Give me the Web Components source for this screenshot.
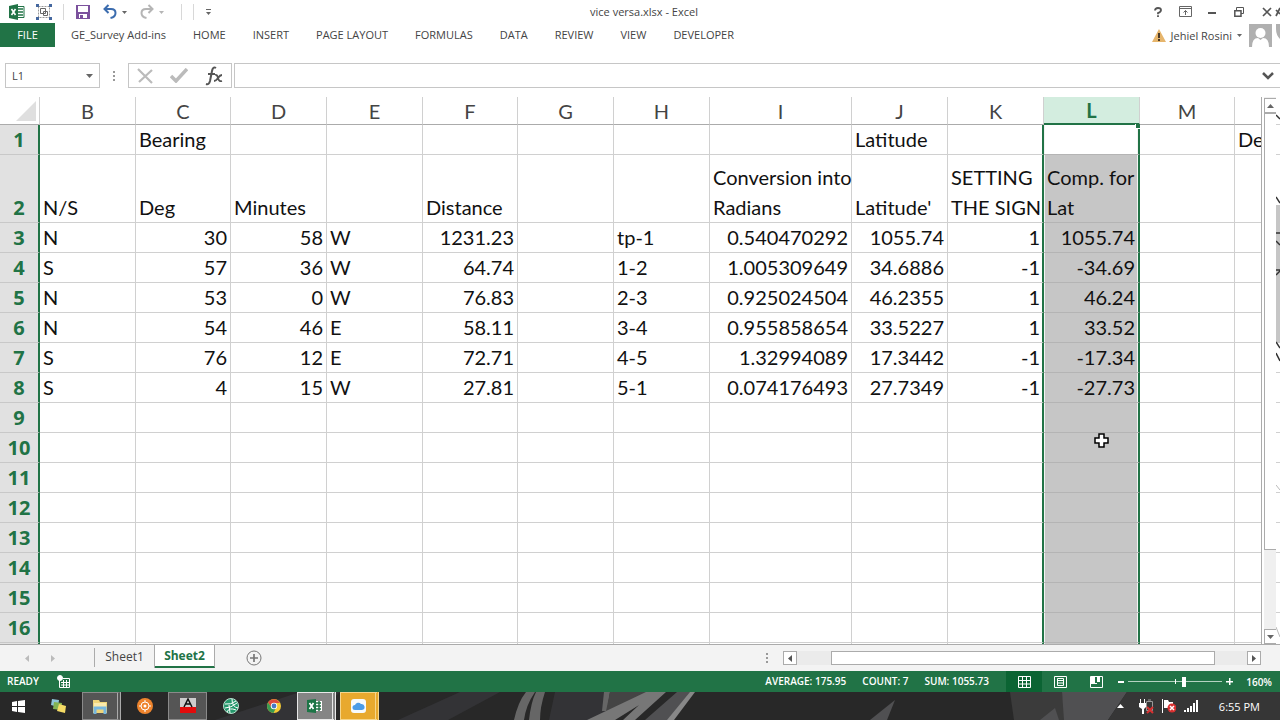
<!DOCTYPE html>
<html lang="en">
<head>
<meta charset="utf-8">
<title>vice versa.xlsx - Excel</title>
<style>
  :root {
    --green: #217346;
    --line: #d0d0d0;
    --edge: #ababab;
    --icon: #666;
    --ui: "Open Sans", "Noto Sans", sans-serif;
    --cells: Lato, "Liberation Sans", sans-serif;
  }
  body {
    margin: 0;
    font-family: var(--ui);
    font-size: 11px;
    color: #444;
    background: #fff;
  }
</style>
</head>
<body>
<excel-window>
  <title-bar slot="top">vice versa.xlsx - Excel</title-bar>
  <ribbon-tabs slot="top" user="Jehiel Rosini"></ribbon-tabs>
  <formula-bar slot="top" cell="L1"></formula-bar>
  <sheet-grid></sheet-grid>
  <sheet-tabs slot="bottom"></sheet-tabs>
  <status-bar slot="bottom"></status-bar>
  <task-bar slot="bottom" time="6:55 PM"></task-bar>
</excel-window>

<script>
/**
 * Base class: every element renders once into its own open shadow root.
 */
class BaseElement extends HTMLElement {
  constructor() {
    super();
    this.attachShadow({ mode: 'open' });
  }

  connectedCallback() {
    this.shadowRoot.innerHTML = `
      <style>
        *, :host { box-sizing: border-box; }
        :host { display: flex; flex: none; }
        button {
          display: flex;
          align-items: center;
          justify-content: center;
          flex: none;
          margin: 0;
          padding: 0;
          border: 0;
          background: none;
          font: inherit;
          color: inherit;
          white-space: nowrap;
        }
        input { font: inherit; color: inherit; margin: 0; outline: none; border-radius: 0; }
        svg { display: block; flex: none; }
      </style>
      ${this.template()}`;
  }
}

class ExcelWindow extends BaseElement {
  template() {
    return `
      <style>
        :host { flex-direction: column; height: 100vh; overflow: hidden; }
        main { display: flex; flex: 1; min-height: 0; }
      </style>
      <slot name="top"></slot>
      <main><slot></slot></main>
      <slot name="bottom"></slot>`;
  }
}

class TitleBar extends BaseElement {
  template() {
    return `
      <style>
        :host { height: 23px; align-items: center; justify-content: space-between; }
        .side { display: flex; align-items: center; flex: 1 1 0; height: 21px; }
        .left { padding-left: 8px; }
        .right { justify-content: flex-end; gap: 11px; overflow: hidden; }
        .right button { width: 16px; }
        .right .close { width: 22px; justify-content: flex-end; }
        .rule { width: 1px; height: 16px; background: #d8d8d8; flex: none; }
        .name { line-height: 23px; white-space: nowrap; }
        .gap { width: 11px; }
        .wide { width: 16px; }
      </style>
      <div class="side left">
        <button aria-label="Excel"><svg width="17" height="16"><path fill="#217346" d="M1 2l9-2v16l-9-2z"/><path fill="#fff" stroke="#217346" d="M10 2.500h6v11h-6"/><path stroke="#217346" stroke-width="1.500" d="M10 5h5M10 8h5M10 11h5"/><path stroke="#fff" stroke-width="1.600" d="M3.500 5l4 6M7.500 5l-4 6"/></svg></button>
        <span class="gap"></span>
        <button aria-label="Group objects"><svg width="16" height="16" fill="none"><path stroke="#999" stroke-dasharray="2 1" d="M2.500 2.500h11v11h-11z"/><path stroke="#666" d="M4.500 4.500h5v5h-5zM7.500 7.500h4v4h-4z"/><path fill="#44679f" d="M0 0h3v3H0zM13 0h3v3h-3zM0 13h3v3H0zM13 13h3v3h-3z"/></svg></button>
        <span class="gap"></span><span class="rule"></span><span class="gap"></span>
        <button aria-label="Save"><svg width="16" height="16"><path fill="#7b519d" d="M1 1h14v14H1z"/><path fill="#fff" d="M3 2h10v6H3zM4 10h8v4H4z"/><path fill="#7b519d" d="M5 11h3v3H5z"/></svg></button>
        <span class="gap"></span>
        <button aria-label="Undo"><svg width="26" height="16" fill="none"><path stroke="#3b6cae" stroke-width="2" d="M3 5h6q4.500 0 4.500 4t-5 5M6.500 1L2.500 5l4 4"/><path fill="#666" d="M20 7h5l-2.500 3z"/></svg></button>
        <span class="gap"></span>
        <button aria-label="Redo"><svg width="26" height="16" fill="none"><path stroke="#b5b5b5" stroke-width="2" d="M13 5H7Q2.500 5 2.500 9t5 5M9.500 1l4 4-4 4"/><path fill="#b5b5b5" d="M20 7h5l-2.500 3z"/></svg></button>
        <span class="wide"></span><span class="rule"></span><span class="gap"></span><span class="rule"></span><span class="gap"></span>
        <button aria-label="Customize"><svg width="7" height="8"><path stroke="#666" d="M1 1.500h5"/><path fill="#666" d="M1 4h5L3.500 7z"/></svg></button>
      </div>
      <span class="name"><slot></slot></span>
      <div class="side right">
        <button aria-label="Help"><svg width="8" height="10" fill="none" stroke="#555" stroke-width="1.800"><path d="M1 3.500Q1 1 4 1t3 2-3 3v1.300M4 8.200V10"/></svg></button>
        <button aria-label="Ribbon options"><svg width="13" height="11" fill="none" stroke="#666"><path d="M.5.500h12v10H.5zM0 2.500h13M6.500 9V4.500M4.500 6.500l2-2 2 2"/></svg></button>
        <button aria-label="Minimize"><svg width="8" height="8"><path fill="#555" d="M0 4h8v2H0z"/></svg></button>
        <button aria-label="Restore"><svg width="10" height="10" fill="none" stroke="#555"><path d="M2.500 3V.5h7v6H7"/><path stroke-width="1.500" d="M.8 3.800H7v5.400H.8z"/></svg></button>
        <button class="close" aria-label="Close"><svg width="18" height="10" fill="none" stroke="#555" stroke-width="1.700"><path d="M1 1l8 8M9 1L1 9M18 1l-4 8M14 3l4 4"/></svg></button>
      </div>`;
  }
}

class RibbonTabs extends BaseElement {
  template() {
    const tabs = ['GE_Survey Add-ins', 'HOME', 'INSERT', 'PAGE LAYOUT', 'FORMULAS', 'DATA', 'REVIEW', 'VIEW', 'DEVELOPER'];
    return `
      <style>
        :host { height: 24px; justify-content: space-between; overflow: hidden; }
        nav { display: flex; gap: 27px; }
        nav button { padding-bottom: 1px; }
        .file { width: 55px; margin-right: -11px; background: var(--green); color: #fff; }
        .user { display: flex; align-items: center; gap: 5px; }
        .face { margin-left: 2px; }
      </style>
      <nav>
        <button class="file">FILE</button>
        ${tabs.map(tab => `<button>${tab}</button>`).join('')}
      </nav>
      <div class="user">
        <svg width="14" height="13"><path fill="#e6b56c" d="M7 0l7 13H0z"/><path fill="#4a3a28" d="M6 4h2v5H6zM6 10h2v2H6z"/></svg>
        <button>${this.getAttribute('user')}</button>
        <svg width="5" height="3"><path fill="#666" d="M0 0h5L2.500 3z"/></svg>
        <svg class="face" width="31" height="23"><path fill="#b0b0b0" d="M0 0h23v23H0zM27 0h4v15q-4-4-4-10z"/><circle cx="11.500" cy="9" r="5" fill="#fff"/><path fill="#fff" d="M3 23q0-9 6-9l2.500 2 2.500-2q6 0 6 9z"/></svg>
      </div>`;
  }
}

class FormulaBar extends BaseElement {
  template() {
    return `
      <style>
        :host { padding: 16px 0 9px 5px; }
        .box { display: flex; align-items: center; height: 25px; border: 1px solid #c6c6c6; }
        .name { width: 95px; }
        .name input { width: 80px; padding: 0 6px 1px; border: 0; background: none; }
        .dots { width: 28px; display: flex; align-items: center; justify-content: center; }
        .tools { width: 104px; justify-content: space-around; margin-right: 2px; }
        .formula { flex: 1; border-right: 0; }
        .formula input { flex: 1; min-width: 0; border: 0; background: none; }
        .formula button { width: 24px; }
      </style>
      <div class="box name">
        <input aria-label="Name box" value="${this.getAttribute('cell')}">
        <svg width="7" height="4"><path fill="#666" d="M0 0h7L3.500 4z"/></svg>
      </div>
      <div class="dots"><svg width="2" height="10"><path fill="#999" d="M0 0h2v2H0zM0 4h2v2H0zM0 8h2v2H0z"/></svg></div>
      <div class="box tools">
        <button aria-label="Cancel"><svg width="17" height="16" fill="none" stroke="#bbb" stroke-width="2.200"><path d="M1 1l14 14M15 2L2 14"/></svg></button>
        <button aria-label="Enter"><svg width="18" height="15" fill="none" stroke="#bbb" stroke-width="3.500"><path d="M1 8l5 5L17 1"/></svg></button>
        <button aria-label="Insert function"><svg width="18" height="20" fill="none" stroke="#555"><path stroke-width="2" d="M11 2Q8 0 7 5L5 15q-1 4-4 3M3 8h7"/><path stroke-width="1.800" d="M10 9q2-1 3 3t4 3M17 9q-2 0-4 3t-4 3"/></svg></button>
      </div>
      <div class="box formula">
        <input aria-label="Formula">
        <button aria-label="Expand"><svg width="12" height="8" fill="none" stroke="#555" stroke-width="2.500"><path d="M1 1l5 5 5-5"/></svg></button>
      </div>`;
  }
}

const COLUMNS = [
  ['B', 96], ['C', 95], ['D', 96], ['E', 96], ['F', 95], ['G', 96], ['H', 96],
  ['I', 142], ['J', 96], ['K', 96], ['L', 96], ['M', 95], ['', 96]
];

const ROWS = {
  1: { C: 'Bearing', J: 'Latitude', N: 'De' },
  2: { B: 'N/S', C: 'Deg', D: 'Minutes', F: 'Distance', I: 'Conversion into<br>Radians', J: "Latitude'", K: 'SETTING<br>THE SIGN', L: 'Comp. for<br>Lat' },
  3: { B: 'N', C: 30, D: 58, E: 'W', F: '1231.23', H: 'tp-1', I: '0.540470292', J: '1055.74', K: 1, L: '1055.74' },
  4: { B: 'S', C: 57, D: 36, E: 'W', F: '64.74', H: '1-2', I: '1.005309649', J: '34.6886', K: -1, L: '-34.69' },
  5: { B: 'N', C: 53, D: '0', E: 'W', F: '76.83', H: '2-3', I: '0.925024504', J: '46.2355', K: 1, L: '46.24' },
  6: { B: 'N', C: 54, D: 46, E: 'E', F: '58.11', H: '3-4', I: '0.955858654', J: '33.5227', K: 1, L: '33.52' },
  7: { B: 'S', C: 76, D: 12, E: 'E', F: '72.71', H: '4-5', I: '1.32994089', J: '17.3442', K: -1, L: '-17.34' },
  8: { B: 'S', C: 4, D: 15, E: 'W', F: '27.81', H: '5-1', I: '0.074176493', J: '27.7349', K: -1, L: '-27.73' }
};

const LAST_ROW = 16;

class SheetGrid extends BaseElement {
  cell(row, col) {
    const value = (ROWS[row] || {})[col || 'N'] ?? '';
    const isNumber = value !== '' && !isNaN(value);
    let extra = '';
    if (row === 1 && col === 'L') extra = '<i class="handle"></i>';
    if (row === 10 && col === 'L') {
      extra = '<svg class="cursor" width="15" height="15"><path fill="#fff" stroke="#000" stroke-width="1.500" d="M5 1h5v4h4v5h-4v4H5v-4H1V5h4z"/></svg>';
    }
    return `<td class="${col}${isNumber ? ' num' : ''}">${value}${extra}</td>`;
  }

  row(n) {
    const label = n > LAST_ROW ? '' : n;
    return `<tr class="r${n}"><th scope="row">${label}</th>${COLUMNS.map(([col]) => this.cell(n, col)).join('')}</tr>`;
  }

  template() {
    const numbers = Array.from({ length: LAST_ROW + 1 }, (_, i) => i + 1);
    return `
      <style>
        :host { flex: 1; min-width: 0; border-bottom: 1px solid var(--edge); }
        .view { flex: 1; min-width: 0; overflow: hidden; border-right: 1px solid var(--edge); }
        table {
          table-layout: fixed;
          width: 0;
          border-collapse: separate;
          border-spacing: 0;
          font-family: var(--cells);
          font-size: 20px;
          line-height: 30px;
          color: #111;
        }
        .heads { width: 40px; }
        .c95 { width: 95px; }
        .c96 { width: 96px; }
        .c142 { width: 142px; }
        tr { height: 30px; }
        .top { height: 28px; }
        .r2 { height: 68px; }
        th, td { padding: 0 3px; border-right: 1px solid var(--line); border-bottom: 1px solid var(--line); }
        td { position: relative; vertical-align: bottom; line-height: 29px; white-space: nowrap; }
        .r2 td { line-height: 30px; }
        thead th { font-weight: 400; line-height: 26px; color: #444; border-bottom-color: var(--edge); }
        thead .L { font-weight: 700; color: var(--green); background: #d3eddf; border-bottom: 2px solid var(--green); }
        thead svg { margin-left: auto; }
        tbody th {
          padding: 0;
          vertical-align: bottom;
          font: 700 20px/29px var(--ui);
          color: var(--green);
          background: #e1e1e1;
          border-right: 2px solid var(--green);
          border-bottom-color: #c8c8c8;
        }
        .num { text-align: right; }
        tbody .K { border-right: 2px solid var(--green); padding-right: 2px; }
        tbody .L {
          background: #c6c6c6;
          border-color: #b4b4b4;
          border-right: 2px solid var(--green);
          box-shadow: inset 1px 0 #f4f4f4, inset -1px 0 #f4f4f4;
        }
        tbody .r1 .L { background: #fff; }
        .handle { position: absolute; right: -2px; top: -1px; width: 5px; height: 5px; background: var(--green); border: solid #fff; border-width: 0 0 1px 1px; }
        .cursor { position: absolute; left: 50px; top: 0; }
        .scroll { display: flex; flex-direction: column; width: 12px; margin-left: 2px; padding-top: 1px; background: #f0f0f0; }
        .scroll button { height: 15px; border: 1px solid var(--edge); border-right: 0; background: #fff; }
        .thumb { flex: 11; border: 1px solid var(--edge); border-right: 0; background: #fff; }
        .track { flex: 2; }
        .behind { width: 4px; }
      </style>
      <div class="view">
        <table>
          <colgroup><col class="heads">${COLUMNS.map(([, width]) => `<col class="c${width}">`).join('')}</colgroup>
          <thead>
            <tr class="top"><th aria-label="Select all"><svg width="20" height="20"><path fill="#dfdfdf" d="M20 0v20H0z"/></svg></th>${COLUMNS.map(([col]) => `<th scope="col" class="${col}">${col}</th>`).join('')}</tr>
          </thead>
          <tbody>${numbers.map(n => this.row(n)).join('')}</tbody>
        </table>
      </div>
      <div class="scroll">
        <button aria-label="Scroll up"><svg width="7" height="4"><path fill="#666" d="M0 4h7L3.500 0z"/></svg></button>
        <div class="thumb"></div>
        <div class="track"></div>
        <button aria-label="Scroll down"><svg width="7" height="4"><path fill="#666" d="M0 0h7L3.500 4z"/></svg></button>
      </div>
      <svg class="behind" width="4" height="548" fill="none">
        <path fill="#c6c6c6" d="M0 108h4v138H0z"/>
        <path stroke="#d0d0d0" d="M0 27.500h4M0 57.500h4M0 275.500h4M0 305.500h4M0 335.500h4M0 365.500h4M0 395.500h4M0 425.500h4M0 455.500h4M0 485.500h4M0 515.500h4"/>
        <path stroke="#333" stroke-width="1.500" d="M0 18l4 4M0 100l4 6M0 136h4M0 144l4 4M0 173h4M0 178l4-4M0 245l4 6M0 256l4 8"/>
        <path stroke="#bbb" d="M0 388l4 5M0 530l4 10"/>
      </svg>`;
  }
}

class SheetTabs extends BaseElement {
  template() {
    return `
      <style>
        :host { height: 26px; align-items: stretch; background: #f3f3f3; font-size: 12px; }
        .arrows { display: flex; align-items: center; justify-content: center; gap: 22px; width: 80px; }
        .split { width: 1px; height: 19px; margin: 3px 0 0 14px; background: var(--edge); }
        .tab { height: 23px; width: 60px; border-right: 1px solid var(--edge); }
        .on { background: #fff; color: var(--green); font-weight: 700; border-bottom: 2px solid var(--green); }
        .add { width: 78px; }
        .bar { display: flex; flex: 1; align-items: center; justify-content: flex-end; padding-right: 19px; }
        .bar .arrow { width: 14px; height: 14px; border: 1px solid var(--edge); background: #fff; }
        .track { display: flex; width: 450px; height: 14px; background: #ebebeb; }
        .thumb { width: 384px; margin-left: 34px; border: 1px solid var(--edge); background: #fff; }
        .dots { margin-right: 15px; }
      </style>
      <div class="arrows">
        <button aria-label="Previous sheet"><svg width="4" height="7"><path fill="#bbb" d="M4 0v7L0 3.500z"/></svg></button>
        <button aria-label="Next sheet"><svg width="4" height="7"><path fill="#bbb" d="M0 0v7l4-3.500z"/></svg></button>
      </div>
      <span class="split"></span>
      <button class="tab">Sheet1</button>
      <button class="tab on">Sheet2</button>
      <button class="add" aria-label="New sheet"><svg width="16" height="16" fill="none" stroke="#777"><circle cx="8" cy="8" r="7"/><path stroke-width="1.700" d="M4 8h8M8 4v8"/></svg></button>
      <div class="bar">
        <svg class="dots" width="2" height="10"><path fill="#999" d="M0 0h2v2H0zM0 4h2v2H0zM0 8h2v2H0z"/></svg>
        <button class="arrow" aria-label="Scroll left"><svg width="4" height="7"><path fill="#555" d="M4 0v7L0 3.500z"/></svg></button>
        <div class="track"><div class="thumb"></div></div>
        <button class="arrow" aria-label="Scroll right"><svg width="4" height="7"><path fill="#555" d="M0 0v7l4-3.500z"/></svg></button>
      </div>`;
  }
}

class StatusBar extends BaseElement {
  template() {
    return `
      <style>
        :host { height: 21px; align-items: stretch; background: var(--green); color: #fff; font-size: 10px; font-weight: 600; line-height: 20px; padding-right: 8px; }
        .ready { margin: 0 18px 0 7px; }
        .record { margin-right: auto; }
        .sums { display: flex; gap: 16px; margin-right: 17px; white-space: nowrap; }
        .view { width: 36px; }
        .view.on { background: #0b6433; }
        input { width: 94px; margin: 0 4px; appearance: none; background: none; }
        input::-webkit-slider-runnable-track {
          height: 10px;
          background: linear-gradient(#fff, #fff) center / 1px 5px no-repeat, linear-gradient(#b5d2c1, #b5d2c1) center / 100% 1px no-repeat;
        }
        input::-webkit-slider-thumb { appearance: none; width: 4px; height: 10px; background: #fff; }
        .percent { width: 39px; justify-content: flex-end; }
      </style>
      <span class="ready">READY</span>
      <button class="record" aria-label="Record macro"><svg width="14" height="13" fill="none" stroke="#fff"><path d="M2.500 5v7.500h10v-9H6M4 7.500h8M4 10h8M6.500 5v7M9.500 5v7"/><circle cx="3" cy="3" r="2.500" fill="#fff"/></svg></button>
      <div class="sums"><span>AVERAGE: 175.95</span><span>COUNT: 7</span><span>SUM: 1055.73</span></div>
      <button class="view on" aria-label="Normal"><svg width="13" height="12" fill="none" stroke="#fff"><path d="M.5.500h12v11H.5zM0 4.500h13M0 8h13M4.500 0v12M8.500 0v12"/></svg></button>
      <button class="view" aria-label="Page layout"><svg width="13" height="12" fill="none" stroke="#fff"><path d="M.5.500h12v11H.5zM3.500 2.500h6v7h-6zM4 4.500h5M4 7h5"/></svg></button>
      <button class="view" aria-label="Page break preview"><svg width="13" height="12"><path fill="none" stroke="#fff" d="M.5.500h12v11H.5z"/><path fill="#fff" d="M1 1h4v6H1zM7 1h3v5H7zM1 7h6v1H1z"/></svg></button>
      <button aria-label="Zoom out"><svg width="10" height="6"><path fill="#fff" d="M4 2h6v2H4z"/></svg></button>
      <input type="range" aria-label="Zoom" min="0" max="100" value="60">
      <button aria-label="Zoom in"><svg width="7" height="7"><path fill="#fff" d="M0 3h7v1.500H0zM3 0h1.500v7H3z"/></svg></button>
      <button class="percent">160%</button>`;
  }
}

class TaskBar extends BaseElement {
  template() {
    return `
      <style>
        :host { position: relative; height: 28px; align-items: stretch; background: #282828; color: #fff; }
        .art { position: absolute; width: 100%; height: 100%; }
        nav, .tray { position: relative; display: flex; align-items: center; }
        button { width: 39px; height: 28px; margin: 0 2px; }
        .start { width: 36px; margin: 0 1px 0 0; }
        .open { background: #555; border: 1px solid #8a8a8a; }
        .stack { border-right: 4px double #aaa; }
        .active { background: #858585; border-color: #e8e8e8; }
        .gold { background: #e8a92e; border-color: #f5d58b; }
        .tray { margin-left: auto; gap: 8px; padding-right: 20px; }
        .tray button { width: 20px; margin: 0; }
        time { margin-left: 13px; white-space: nowrap; }
      </style>
      <svg class="art" viewBox="0 0 1280 28" preserveAspectRatio="none">
        <path fill="#333336" d="M398 28l62-28h40l-52 28zM215 28L300 0h40l-30 28zM555 0h50v28h-56z"/>
        <path fill="#666" d="M514 28q4-18 12-28h9q-9 13-11 28zM529 28q2-18 7-28h9q-5 15-5 28zM604 0h6l-3 19h-5z"/>
        <path fill="#444" d="M610 0h42l-47 24z"/>
        <path fill="#777" d="M587 28L646 0h14l-45 28zM623 28l30-28h13l-31 28z"/>
        <path fill="#505052" d="M645 28l32-28h17l-26 28zM870 28l25-20-8 20z"/>
        <path fill="#888" d="M667 28l23-28h5l-21 28z"/>
        <path fill="#3b3b3b" d="M1010 0h52l4 28h-52z"/>
        <path fill="#505052" d="M1062 0h65l-19 28h-44zM1040 28l15-12 4 12z"/>
        <path fill="#363636" d="M1127 0h153v28h-172z"/>
      </svg>
      <nav>
        <button class="start" aria-label="Start"><svg width="13" height="13"><path fill="#fff" d="M0 2l5-1v5H0zM6 1l7-1v6H6zM0 7h5v5l-5-1zM6 7h7v6l-7-1z"/></svg></button>
        <button aria-label="Sticky notes"><svg width="16" height="16"><path fill="#8fc5d8" d="M1 1l7 1-1 7-7-2z"/><path fill="#83b353" d="M3 4l8 1-1 7-8-1z"/><path fill="#f4db65" d="M8 6l7 2-1 7-8-2z"/></svg></button>
        <button class="open stack" aria-label="File Explorer"><svg width="16" height="15"><path fill="#efd57a" d="M1 1h6l1 2h7v11H1z"/><path fill="#f9eaad" d="M2 4h12v4H2z"/><path fill="none" stroke="#76b7df" stroke-width="3" d="M3 15V9h10v6"/></svg></button>
        <button aria-label="Recorder"><svg width="16" height="16" fill="none"><circle cx="8" cy="8" r="8" fill="#ee842d"/><circle cx="8" cy="8" r="4" stroke="#fff"/><circle cx="8" cy="8" r="1.500" fill="#fff"/><path stroke="#fff" d="M8 2v2M8 12v2M2 8h2M12 8h2"/></svg></button>
        <button class="open" aria-label="AutoCAD"><svg width="16" height="16"><path fill="#ccc" d="M0 0h16v9H0z"/><path fill="#e30b0b" d="M0 9h16v6H0z"/><path fill="none" stroke="#111" stroke-width="1.500" d="M4 9l4-8 4 8M5 6h6"/></svg></button>
        <button aria-label="Globe"><svg width="16" height="16" fill="none"><circle cx="8" cy="8" r="7.500" fill="#24976b" stroke="#b8e0cf"/><path stroke="#fff" d="M2 6q6 1 11-3M2 10q6 0 12-5M9 1q0 8 6 9M4 14q2-5 9-2M7 15l-1-8"/></svg></button>
        <button aria-label="Chrome"><svg width="14" height="14"><circle cx="7" cy="7" r="7" fill="#f4ca35"/><path fill="#dc4b3f" d="M1 3.500A7 7 0 0 1 13 4H7L4 8z"/><path fill="#399b53" d="M1 3.500A7 7 0 0 0 6.500 14L9 9 4 8z"/><circle cx="7" cy="7" r="3.200" fill="#fff"/><circle cx="7" cy="7" r="2.400" fill="#4679c6"/></svg></button>
        <button class="open stack active" aria-label="Excel"><svg width="16" height="14"><path fill="#fff" d="M8 2h7v10H8z"/><path stroke="#217346" stroke-width="1.500" d="M9 4h5M9 7h5M9 10h5M12 2v10"/><path fill="#1c7546" d="M0 1l9-1v14l-9-1z"/><path stroke="#fff" stroke-width="1.700" d="M2.500 4l4 6M6.500 4l-4 6"/></svg></button>
        <button class="open stack gold" aria-label="iCloud"><svg width="15" height="14"><rect width="15" height="14" rx="3" fill="#f7fafc"/><path fill="#4b9ce8" d="M4 11a2.500 2.500 0 0 1 0-5 3.500 3.500 0 0 1 6-1 3 3 0 0 1 1 6z"/></svg></button>
      </nav>
      <div class="tray">
        <button aria-label="Show hidden icons"><svg width="7" height="4"><path fill="#fff" d="M0 4h7L3.500 0z"/></svg></button>
        <svg width="15" height="15" fill="none"><path stroke="#999" d="M7.500 2.500h6v9h-6zM9 1h3"/><path fill="#fff" d="M0 4h7v4L5 10v5H3v-5L0 8zM1 0h1v4H1zM5 0h1v4H5z"/><path stroke="#d93030" stroke-width="2" d="M8 8l6 6M14 8l-6 6"/></svg>
        <svg width="14" height="14"><path fill="#fff" d="M0 0h1v14H0zM2 1h4l1 2h4v6H2z"/><circle cx="10" cy="9" r="4.500" fill="#d93030"/><path stroke="#fff" stroke-width="1.500" d="M8 7l4 4M12 7l-4 4"/></svg>
        <svg width="14" height="12"><path fill="#fff" d="M0 10h2v2H0zM3 8h2v4H3zM6 6h2v6H6zM9 3h2v9H9zM12 0h2v12h-2z"/></svg>
        <time>${this.getAttribute('time')}</time>
      </div>`;
  }
}

// Register the custom elements
customElements.define('excel-window', ExcelWindow);
customElements.define('title-bar', TitleBar);
customElements.define('ribbon-tabs', RibbonTabs);
customElements.define('formula-bar', FormulaBar);
customElements.define('sheet-grid', SheetGrid);
customElements.define('sheet-tabs', SheetTabs);
customElements.define('status-bar', StatusBar);
customElements.define('task-bar', TaskBar);
</script>
</body>
</html>
